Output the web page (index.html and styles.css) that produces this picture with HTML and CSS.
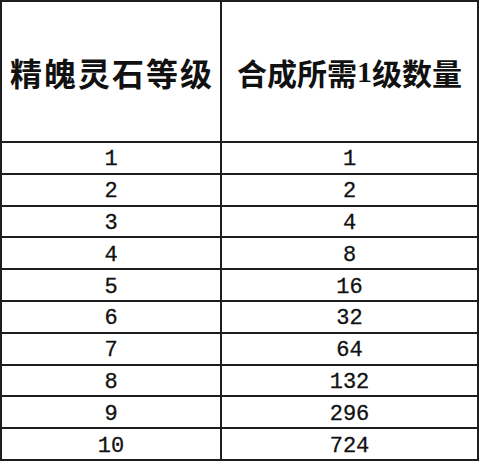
FILE: index.html
```html
<!DOCTYPE html>
<html lang="zh">
<head>
<meta charset="utf-8">
<link rel="stylesheet" href="styles.css">
</head>
<body>
<div class="sheet">
  <div class="head head-left">精魄灵石等级</div>
  <div class="head head-right">合成所需<span class="one">1</span>级数量</div>
  <div class="cell">1</div><div class="cell">1</div>
  <div class="cell">2</div><div class="cell">2</div>
  <div class="cell">3</div><div class="cell">4</div>
  <div class="cell">4</div><div class="cell">8</div>
  <div class="cell">5</div><div class="cell">16</div>
  <div class="cell">6</div><div class="cell">32</div>
  <div class="cell">7</div><div class="cell">64</div>
  <div class="cell">8</div><div class="cell">132</div>
  <div class="cell">9</div><div class="cell">296</div>
  <div class="cell">10</div><div class="cell">724</div>
</div>
</body>
</html>
```

FILE: styles.css
```css
html, body {
  margin: 0;
  padding: 0;
  background: #ffffff;
}
.sheet {
  box-sizing: border-box;
  width: 479px;
  height: 461px;
  padding: 2px;
  background: #1e1e1e;
  display: grid;
  grid-template-columns: 218px 255px;
  grid-template-rows: 139px repeat(10, 1fr);
  column-gap: 2px;
  row-gap: 2px;
}
.head {
  background: #fff;
  display: flex;
  align-items: center;
  justify-content: center;
  font-family: "Noto Sans CJK SC", sans-serif;
  font-weight: 700;
  color: #111;
  white-space: nowrap;
  padding-top: 1px;
}
.head-left {
  font-size: 32px;
  letter-spacing: 2px;
  padding-left: 2px;
}
.head-right {
  font-size: 30px;
  letter-spacing: 0;
}
.one {
  font-family: "Liberation Serif", serif;
  font-weight: 700;
  letter-spacing: 0;
}
.cell {
  background: #fff;
  display: flex;
  align-items: center;
  justify-content: center;
  font-family: "Liberation Mono", monospace;
  font-size: 22px;
  color: #111;
  padding-top: 5px;
  line-height: 1;
  -webkit-text-stroke: 0.3px #111;
}
```
